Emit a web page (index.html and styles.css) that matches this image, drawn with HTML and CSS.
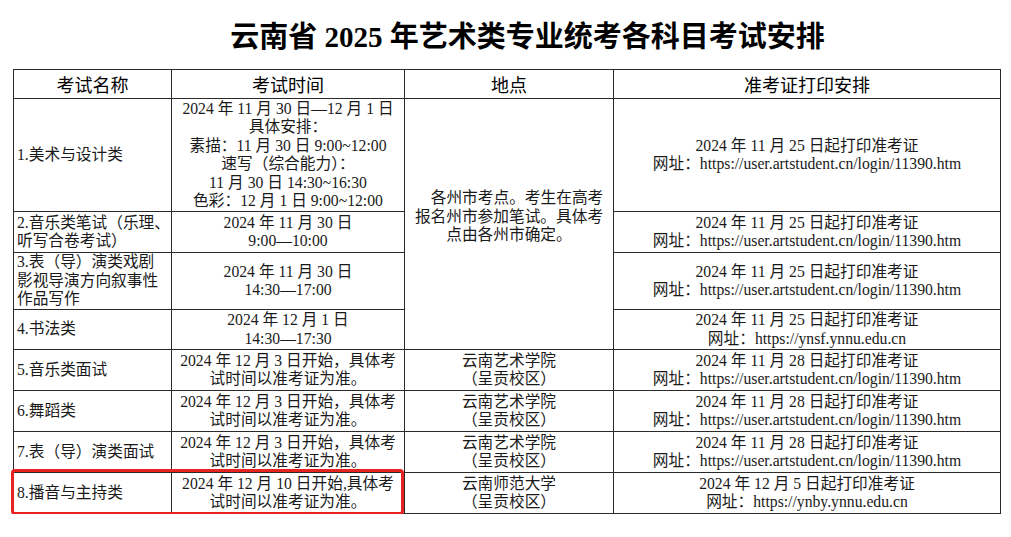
FILE: index.html
```html
<!DOCTYPE html>
<html lang="zh-CN">
<head>
<meta charset="utf-8">
<title>云南省 2025 年艺术类专业统考各科目考试安排</title>
<link rel="stylesheet" href="styles.css">
</head>
<body>
<h1 class="title">云南省 2025 年艺术类专业统考各科目考试安排</h1>
<div class="wrap">
<table class="sched">
  <colgroup>
    <col class="c1"><col class="c2"><col class="c3"><col class="c4">
  </colgroup>
  <thead>
    <tr class="rh">
      <th>考试名称</th><th>考试时间</th><th>地点</th><th>准考证打印安排</th>
    </tr>
  </thead>
  <tbody>
    <tr class="r1">
      <td class="name">1.美术与设计类</td>
      <td class="ctr">2024 年 11 月 30 日—12 月 1 日<br>具体安排：<br>素描：11 月 30 日 9:00~12:00<br>速写（综合能力）：<br>11 月 30 日 14:30~16:30<br>色彩：12 月 1 日 9:00~12:00</td>
      <td class="ctr place" rowspan="4"><span class="ind">各州市考点。考生在高考</span><br>报名州市参加笔试。具体考<br>点由各州市确定。</td>
      <td class="ctr">2024 年 11 月 25 日起打印准考证<br>网址：https://user.artstudent.cn/login/11390.htm</td>
    </tr>
    <tr class="r2">
      <td class="name">2.音乐类笔试（乐理、<br>听写合卷考试）</td>
      <td class="ctr">2024 年 11 月 30 日<br>9:00—10:00</td>
      <td class="ctr">2024 年 11 月 25 日起打印准考证<br>网址：https://user.artstudent.cn/login/11390.htm</td>
    </tr>
    <tr class="r3">
      <td class="name">3.表（导）演类戏剧<br>影视导演方向叙事性<br>作品写作</td>
      <td class="ctr">2024 年 11 月 30 日<br>14:30—17:00</td>
      <td class="ctr">2024 年 11 月 25 日起打印准考证<br>网址：https://user.artstudent.cn/login/11390.htm</td>
    </tr>
    <tr class="r4">
      <td class="name">4.书法类</td>
      <td class="ctr">2024 年 12 月 1 日<br>14:30—17:30</td>
      <td class="ctr">2024 年 11 月 25 日起打印准考证<br>网址：https://ynsf.ynnu.edu.cn</td>
    </tr>
    <tr class="r5">
      <td class="name">5.音乐类面试</td>
      <td class="ctr">2024 年 12 月 3 日开始，具体考<br>试时间以准考证为准。</td>
      <td class="ctr">云南艺术学院<br>（呈贡校区）</td>
      <td class="ctr">2024 年 11 月 28 日起打印准考证<br>网址：https://user.artstudent.cn/login/11390.htm</td>
    </tr>
    <tr class="r6">
      <td class="name">6.舞蹈类</td>
      <td class="ctr">2024 年 12 月 3 日开始，具体考<br>试时间以准考证为准。</td>
      <td class="ctr">云南艺术学院<br>（呈贡校区）</td>
      <td class="ctr">2024 年 11 月 28 日起打印准考证<br>网址：https://user.artstudent.cn/login/11390.htm</td>
    </tr>
    <tr class="r7">
      <td class="name">7.表（导）演类面试</td>
      <td class="ctr">2024 年 12 月 3 日开始，具体考<br>试时间以准考证为准。</td>
      <td class="ctr">云南艺术学院<br>（呈贡校区）</td>
      <td class="ctr">2024 年 11 月 28 日起打印准考证<br>网址：https://user.artstudent.cn/login/11390.htm</td>
    </tr>
    <tr class="r8">
      <td class="name">8.播音与主持类</td>
      <td class="ctr">2024 年 12 月 10 日开始,具体考<br>试时间以准考证为准。</td>
      <td class="ctr">云南师范大学<br>（呈贡校区）</td>
      <td class="ctr">2024 年 12 月 5 日起打印准考证<br>网址：https://ynby.ynnu.edu.cn</td>
    </tr>
  </tbody>
</table>
<div class="highlight"></div>
</div>
</body>
</html>
```
FILE: styles.css
```css
html, body {
  margin: 0;
  padding: 0;
  background: #ffffff;
}
body {
  font-family: "Liberation Serif", "Noto Sans CJK SC", serif;
  color: #111;
}
.title {
  margin: 17px 0 12px 0;
  padding-left: 44px;
  height: 40px;
  line-height: 40px;
  text-align: center;
  font-size: 29px;
  font-weight: 700;
  color: #000;
  font-family: "Liberation Serif", "Noto Sans CJK SC", serif;
}
.wrap {
  position: relative;
  margin-left: 13px;
  width: 987px;
}
.sched {
  border-collapse: collapse;
  table-layout: fixed;
  width: 987px;
  font-size: 15.7px;
  line-height: 18.5px;
}
.c1 { width: 158px; }
.c2 { width: 233px; }
.c3 { width: 209px; }
.c4 { width: 387px; }
.sched th, .sched td {
  border: 1px solid #2a2a2a;
  padding: 0 3px;
  vertical-align: middle;
  overflow: hidden;
}
.sched th {
  font-family: "Noto Sans CJK SC", sans-serif;
  font-weight: 400;
  font-size: 18px;
  line-height: 24px;
  color: #000;
}
.sched td {
  font-weight: 400;
  white-space: nowrap;
  color: #1a1a1a;
}
.name {
  text-align: left;
  padding-left: 7px;
}
.ctr {
  text-align: center;
}
.sched td.place {
  vertical-align: top;
  padding-top: 90px;
}
.ind {
  padding-left: 16px;
}
.rh { height: 29px; }
.r1 { height: 113px; }
.r2 { height: 41px; }
.r3 { height: 57px; }
.r4 { height: 40px; }
.r5 { height: 41px; }
.r6 { height: 41px; }
.r7 { height: 41px; }
.r8 { height: 41px; }
.highlight {
  position: absolute;
  left: -2px;
  top: 400px;
  width: 393px;
  height: 46px;
  box-sizing: border-box;
  border: 3px solid #e8231f;
  border-radius: 4px;
  pointer-events: none;
}
```
